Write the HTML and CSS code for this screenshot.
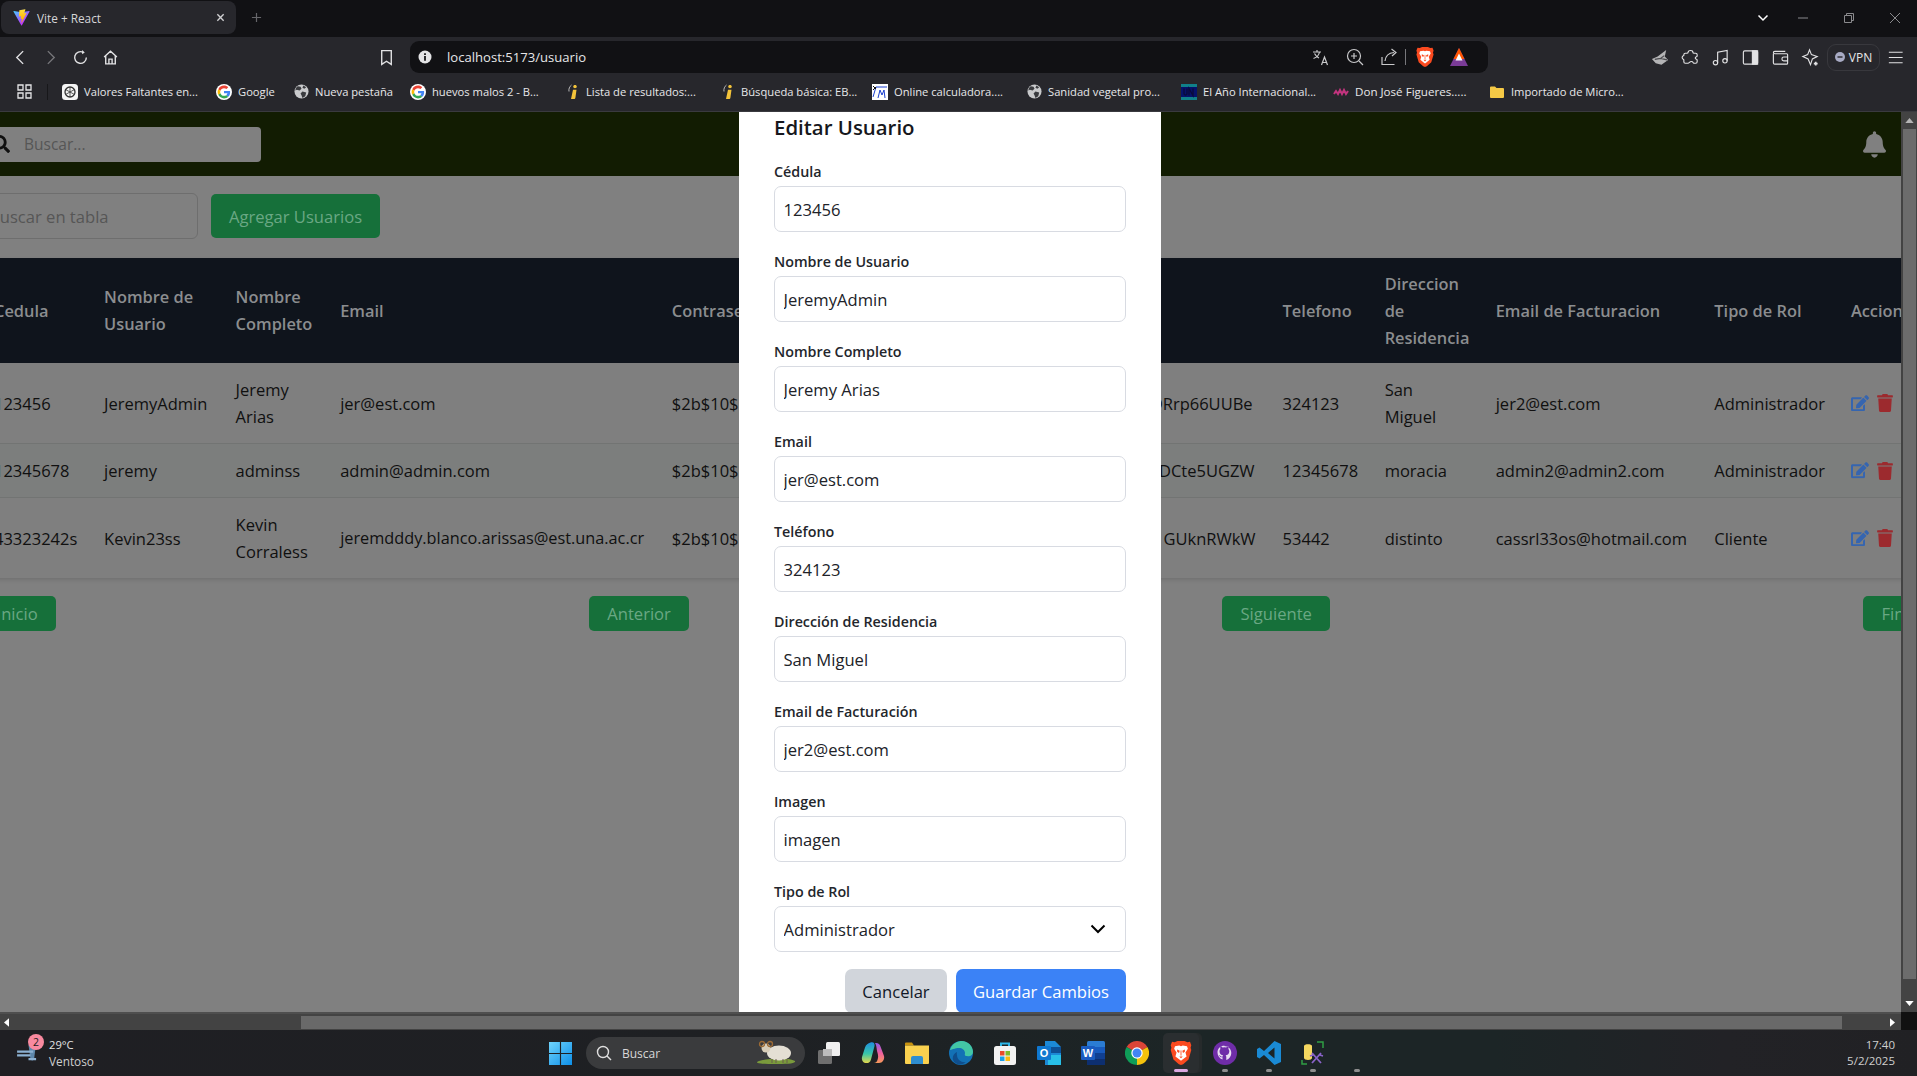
FILE: index.html
```html
<!DOCTYPE html>
<html lang="es">
<head>
<meta charset="utf-8">
<title>Vite + React</title>
<link rel="stylesheet" href="styles.css">
</head>
<body>
<svg class="defs" width="0" height="0" aria-hidden="true">
  <defs>
    <linearGradient id="vg1" x1="6" y1="33" x2="235" y2="344" gradientUnits="userSpaceOnUse"><stop stop-color="#41D1FF"/><stop offset="1" stop-color="#BD34FE"/></linearGradient>
    <linearGradient id="vg2" x1="194" y1="8" x2="236" y2="293" gradientUnits="userSpaceOnUse"><stop stop-color="#FFEA83"/><stop offset=".08" stop-color="#FFDD35"/><stop offset="1" stop-color="#FFA800"/></linearGradient>
    <linearGradient id="winG" x1="0" y1="0" x2="1" y2="1"><stop stop-color="#6fd3fb"/><stop offset="1" stop-color="#0d8fe8"/></linearGradient>
    <linearGradient id="copA" x1="0" y1="0" x2="0" y2="1"><stop stop-color="#1f8fe0"/><stop offset=".55" stop-color="#38c6a8"/><stop offset="1" stop-color="#e6d84a"/></linearGradient>
    <linearGradient id="copB" x1="0" y1="0" x2="0" y2="1"><stop stop-color="#8a5be6"/><stop offset=".5" stop-color="#ee5fa0"/><stop offset="1" stop-color="#f79a5a"/></linearGradient>
    <symbol id="vite" viewBox="0 0 410 404">
      <path d="M399.641 59.5246L215.643 388.545C211.844 395.338 202.084 395.378 198.228 388.618L10.5817 59.5563C6.38087 52.1896 12.6802 43.2665 21.0281 44.7586L205.223 77.6824C206.398 77.8924 207.601 77.8904 208.776 77.6763L389.119 44.8058C397.439 43.2894 403.768 52.1434 399.641 59.5246Z" fill="url(#vg1)"/>
      <path d="M292.965 1.5744L156.801 28.2552C154.563 28.6937 152.906 30.5903 152.771 32.8664L144.395 174.33C144.198 177.662 147.258 180.248 150.51 179.498L188.42 170.749C191.967 169.931 195.172 173.055 194.443 176.622L183.18 231.775C182.422 235.487 185.907 238.661 189.532 237.56L212.947 230.446C216.577 229.344 220.065 232.527 219.297 236.242L201.398 322.875C200.278 328.294 207.486 331.249 210.492 326.603L212.5 323.5L323.454 102.072C325.312 98.3645 322.108 94.137 318.036 94.9228L279.014 102.454C275.347 103.161 272.227 99.746 273.262 96.1583L298.731 7.86689C299.767 4.27314 296.636 0.855181 292.965 1.5744Z" fill="url(#vg2)"/>
    </symbol>
    <symbol id="google" viewBox="-6 -6 60 60">
      <circle cx="24" cy="24" r="30" fill="#fff"/>
      <path fill="#EA4335" d="M24 9.5c3.54 0 6.71 1.22 9.21 3.6l6.85-6.85C35.9 2.38 30.47 0 24 0 14.62 0 6.51 5.38 2.56 13.22l7.98 6.19C12.43 13.72 17.74 9.5 24 9.5z"/>
      <path fill="#4285F4" d="M46.98 24.55c0-1.57-.15-3.09-.38-4.55H24v9.02h12.94c-.58 2.96-2.26 5.48-4.78 7.18l7.73 6c4.51-4.18 7.09-10.36 7.09-17.65z"/>
      <path fill="#FBBC05" d="M10.53 28.59c-.48-1.45-.76-2.99-.76-4.59s.27-3.14.76-4.59l-7.98-6.19C.92 16.46 0 20.12 0 24c0 3.88.92 7.54 2.56 10.78l7.97-6.19z"/>
      <path fill="#34A853" d="M24 48c6.48 0 11.93-2.13 15.89-5.81l-7.73-6c-2.15 1.45-4.92 2.3-8.16 2.3-6.26 0-11.57-4.22-13.47-9.91l-7.98 6.19C6.51 42.62 14.62 48 24 48z"/>
    </symbol>
    <symbol id="globe" viewBox="0 0 16 16">
      <circle cx="8" cy="8" r="7.500" fill="#c9cacc"/>
      <path d="M4 2.500l3 .5 1 2-2 2-3-1-1.500 1C1.500 5 2.500 3.500 4 2.500zM9 8l4 1-1 4-3 2-1-3-1-2zM10 1.500l3 2-2 1.500-2-1z" fill="#3a3b3f"/>
    </symbol>
    <symbol id="info-yellow" viewBox="0 0 13 16">
      <path d="M8 1c1 0 1.800.7 1.800 1.600S9 4.300 8 4.300 6.200 3.500 6.200 2.600 7 1 8 1zM6 5.700h3.500L8.400 13.700c-.1.800-.6 1.300-1.500 1.300H4z" fill="#f3c33a"/>
      <path d="M4.500 1C2.500 2.500 1.500 5 2 7.500" stroke="#b9b9b9" fill="none"/>
    </symbol>
    <symbol id="brave" viewBox="0 0 24 28">
      <path d="M4.500 1.500L8 0h8l3.500 1.500L22.500 1l1.500 4-.8 3 .8 2.500-3.200 11L14.500 27 12 28l-2.500-1L3.200 21.500 0 10.500.8 8 0 5l1.500-4z" fill="#fb4a1f"/>
      <path d="M5 6l5-.8 2 .8 2-.8 5 .8 1 3-2.800 4.500L18.500 18 13.500 22l-1.500 1-1.500-1L5.500 18l1.300-4.500L4 9z" fill="#fff"/>
      <path d="M7.500 10l3 1.500-.8 2.500-2.200-1.500zM16.500 10l-3 1.500.8 2.500 2.200-1.500zM10 18h4l-2 2.200z" fill="#fb4a1f"/>
      <path d="M12 11v6" stroke="#fb4a1f"/>
    </symbol>
    <symbol id="search-fa" viewBox="0 0 512 512"><path d="M505 442.700L405.300 343c-4.500-4.500-10.600-7-17-7H372c27.600-35.300 44-79.700 44-128C416 93.100 322.900 0 208 0S0 93.100 0 208s93.100 208 208 208c48.300 0 92.700-16.400 128-44v16.300c0 6.400 2.500 12.500 7 17l99.700 99.700c9.400 9.400 24.600 9.400 33.900 0l28.300-28.300c9.400-9.400 9.400-24.600.1-34zM208 336c-70.700 0-128-57.200-128-128 0-70.700 57.200-128 128-128 70.700 0 128 57.200 128 128 0 70.700-57.200 128-128 128z"/></symbol>
    <symbol id="edit" viewBox="0 0 576 512"><path d="M402.600 83.200l90.200 90.200c3.800 3.800 3.800 10 0 13.800L274.400 405.600l-92.800 10.300c-12.400 1.400-22.900-9.100-21.500-21.500l10.300-92.800L388.800 83.200c3.800-3.800 10-3.800 13.800 0zm162-22.900l-48.800-48.800c-15.200-15.200-39.900-15.200-55.200 0l-35.400 35.400c-3.800 3.800-3.800 10 0 13.800l90.200 90.200c3.800 3.800 10 3.800 13.800 0l35.400-35.400c15.200-15.300 15.200-40 0-55.200zM384 346.200V448H64V128h229.800c3.200 0 6.200-1.300 8.500-3.500l40-40c7.600-7.600 2.200-20.500-8.500-20.500H48C21.500 64 0 85.500 0 112v352c0 26.500 21.500 48 48 48h352c26.500 0 48-21.500 48-48V306.200c0-10.700-12.900-16-20.500-8.500l-40 40c-2.200 2.300-3.500 5.300-3.500 8.500z"/></symbol>
    <symbol id="trash" viewBox="0 0 448 512"><path d="M432 32H312l-9.400-18.700A24 24 0 0 0 281.100 0H166.800a23.720 23.720 0 0 0-21.400 13.300L136 32H16A16 16 0 0 0 0 48v32a16 16 0 0 0 16 16h416a16 16 0 0 0 16-16V48a16 16 0 0 0-16-16zM53.200 467a48 48 0 0 0 47.900 45h245.800a48 48 0 0 0 47.900-45L416 128H32z"/></symbol>
  </defs>
</svg>

<header class="tabstrip">
  <div class="tab">
    <svg class="tab-icon"><use href="#vite"/></svg>
    <span class="tab-title">Vite + React</span>
    <svg class="tab-close" viewBox="0 0 10 10"><path d="M1.500 1.500l7 7M8.500 1.500l-7 7"/></svg>
  </div>
  <svg class="tab-plus" viewBox="0 0 12 12"><path d="M6 1v10M1 6h10"/></svg>
  <div class="win-controls">
    <span class="win-cell win-chevron"><svg viewBox="0 0 12 12" width="12" height="12"><path d="M1.500 3.500L6 8l4.500-4.500" fill="none" stroke="#fff" stroke-width="1.500"/></svg></span>
    <span class="win-cell"><svg viewBox="0 0 12 12" width="12" height="12"><path d="M1 6h10" class="win-line"/></svg></span>
    <span class="win-cell"><svg viewBox="0 0 12 12" width="12" height="12"><path d="M1.500 3.500h7v7h-7zM3.500 3.500v-2h7v7h-2" class="win-line"/></svg></span>
    <span class="win-cell win-close"><svg viewBox="0 0 12 12" width="12" height="12"><path d="M1 1l10 10M11 1L1 11" class="win-line"/></svg></span>
  </div>
</header>

<nav class="toolbar">
  <span class="tool"><svg viewBox="0 0 16 16"><path d="M10.500 2L4.500 8l6 6"/></svg></span>
  <span class="tool tool-dim"><svg viewBox="0 0 16 16"><path d="M5.500 2l6 6-6 6"/></svg></span>
  <span class="tool"><svg viewBox="0 0 16 16"><path d="M13.500 8A5.500 5.500 0 1 1 10.500 3.100"/><path d="M9.500 1l2.500 2.200L9.500 5z" class="solid"/></svg></span>
  <span class="tool"><svg viewBox="0 0 16 16"><path d="M2 7.500L8 2l6 5.500M3.500 6.500V14h9V6.500M6.500 14V9.500h3V14"/></svg></span>
  <span class="tool tool-bookmark"><svg viewBox="0 0 16 16"><path d="M3.500 1.500h9v13L8 11.500l-4.500 3z"/></svg></span>
  <div class="addressbar">
    <svg class="addr-info" viewBox="0 0 16 16"><circle cx="8" cy="8" r="6.500" fill="#e4e4e6"/><path d="M7.100 7h1.800v4.800H7.100zM7.100 4.200h1.800V6H7.100z" fill="#17171a"/></svg>
    <span class="addr-url">localhost:5173/usuario</span>
    <div class="addr-actions">
      <svg class="addr-icon" viewBox="0 0 20 20"><path d="M2 5h8M6 3v2M8.500 5c-.5 3-3 5.500-6 6.500M3.500 6.500c1 2 2.500 3.500 4.500 4.500M10.500 18l3-8 3 8M11.500 15.500h4"/></svg>
      <svg class="addr-icon" viewBox="0 0 20 20"><circle cx="9" cy="9" r="6.500"/><path d="M14 14l4 4M9 6v6M6 9h6"/></svg>
      <svg class="addr-icon" viewBox="0 0 20 20"><path d="M3 10v7.500h12.500M6 14c.5-5 3.500-8 9-8.500M12.500 2L17 5.500 13 9"/></svg>
      <span class="addr-sep"></span>
      <svg class="addr-brand"><use href="#brave"/></svg>
      <svg class="addr-brand" viewBox="0 0 20 20"><path d="M10 1L19 19H1z" fill="#7a3b97"/><path d="M10 1L15.500 12H4.500z" fill="#ff5500"/><path d="M10 6.500l3.500 7h-7z" fill="#fff"/></svg>
    </div>
  </div>
  <span class="tool tool-ext-first tool-large"><svg viewBox="0 0 20 20"><path d="M1 11.500L7 9l9-7-1.500 7 3.500 3.500-7 5-6-1.500z" class="solid-gray"/><path d="M4 12l6-1 7 1.500M10 11l4-3" stroke="#4a4a4e" fill="none"/></svg></span>
  <span class="tool tool-large"><svg viewBox="0 0 20 20"><path d="M7.500 4.500C7.500 2 12.500 2 12.500 4.500c0 .8.800 1 1.500 1h1.500c1 0 1.500.5 1.500 1.500v1.500c0 .8-2 .5-2 2s2 1.200 2 2v2c0 1-.5 1.500-1.500 1.500h-2c-1 0-.5-1.800-2.500-1.800S8.500 16 7.500 16h-3c-1 0-1.500-.5-1.500-1.500v-2c0-1-1.800-.5-1.800-2.500s1.800-1.500 1.800-2.500V7c0-1 .5-1.500 1.500-1.500H6c.8 0 1.500-.2 1.500-1z"/></svg></span>
  <span class="tool tool-large"><svg viewBox="0 0 20 20"><path d="M7 15.500V4.500l10-2V13.500"/><circle cx="4.700" cy="15.500" r="2.300"/><circle cx="14.700" cy="13.500" r="2.300"/></svg></span>
  <span class="tool tool-large"><svg viewBox="0 0 20 20"><rect x="2.500" y="3" width="15" height="14" rx="1.500"/><rect x="12" y="3" width="5.500" height="14" class="solid-soft"/></svg></span>
  <span class="tool tool-large"><svg viewBox="0 0 20 20"><path d="M4 3.500h11M2.500 6v9.500a1.500 1.500 0 0 0 1.500 1.500h12.500a1 1 0 0 0 1-1V7a1 1 0 0 0-1-1H4a1.500 1.500 0 0 1-1.500-1.500c0-.5.5-1 1.500-1M18 9.500h-4.500a2 2 0 0 0 0 4H18"/></svg></span>
  <span class="tool tool-large"><svg viewBox="0 0 20 20"><path d="M9 2l2 5 6 2-5 2.500-2 6-2.500-6L2 9l5-2z"/><path d="M15.500 14.500v4M13.500 16.500h4" stroke-width="1.800"/></svg></span>
  <span class="vpn"><svg class="vpn-dot" viewBox="0 0 10 10"><circle cx="5" cy="5" r="5" fill="#a8abc4"/><path d="M2.500 4.300h5v1.400h-5z" fill="#27272c"/></svg>VPN</span>
  <span class="tool tool-large"><svg viewBox="0 0 20 20"><path d="M3 4.500h14.500M3 10h14.500M3 15.500h14.500"/></svg></span>
</nav>

<nav class="bookmarks">
  <svg class="apps" viewBox="0 0 15 15"><path d="M1 1h5v5H1zM9 1h5v5H9zM1 9h5v5H1zM9 9h5v5H9z"/></svg>
  <span class="bm-sep"></span>
  <a class="bm"><svg class="bm-ico" viewBox="0 0 16 16"><rect width="16" height="16" rx="3.500" fill="#f5f5f5"/><circle cx="8" cy="8" r="5" fill="none" stroke="#333" stroke-width="1.300"/><path d="M8 3v10M3.500 5.500l9 5M3.500 10.500l9-5" stroke="#333" stroke-width=".8"/></svg><span>Valores Faltantes en...</span></a>
  <a class="bm"><svg class="bm-ico"><use href="#google"/></svg><span>Google</span></a>
  <a class="bm"><svg class="bm-ico bm-ico-globe"><use href="#globe"/></svg><span>Nueva pestaña</span></a>
  <a class="bm"><svg class="bm-ico"><use href="#google"/></svg><span>huevos malos 2 - B...</span></a>
  <a class="bm"><svg class="bm-ico bm-ico-narrow"><use href="#info-yellow"/></svg><span>Lista de resultados:...</span></a>
  <a class="bm"><svg class="bm-ico bm-ico-narrow"><use href="#info-yellow"/></svg><span>Búsqueda básica: EB...</span></a>
  <a class="bm"><svg class="bm-ico" viewBox="0 0 16 16"><rect width="16" height="16" fill="#fff"/><path d="M1 13L4 3h11M6 14l2-8 2 5 2-5 1 8" fill="none" stroke="#1a3fd0"/><path d="M1 2l3 3M1 6l3-3" stroke="#111"/></svg><span>Online calculadora....</span></a>
  <a class="bm"><svg class="bm-ico bm-ico-globe"><use href="#globe"/></svg><span>Sanidad vegetal pro...</span></a>
  <a class="bm"><svg class="bm-ico" viewBox="0 0 16 16"><rect width="16" height="16" fill="#06116b"/><rect y="0" width="16" height="3" fill="#10808a"/><rect y="13" width="16" height="3" fill="#10808a"/><path d="M3 4.500v5c0 2 3 2 3 0v-5M8 11.500v-7l4 7v-7" fill="none" stroke="#0a0a3a" stroke-width="1.300"/></svg><span>El Año Internacional...</span></a>
  <a class="bm"><svg class="bm-ico" viewBox="0 0 16 16"><path d="M1 10l2-3 2 3 2-4 2 4 2-4 2 4 2-3" fill="none" stroke="#c2347e" stroke-width="2"/></svg><span class="bm-wide">Don José Figueres.....</span></a>
  <a class="bm"><svg class="bm-ico" viewBox="0 0 16 16"><path d="M1 3.500a1 1 0 0 1 1-1h4l1.500 1.500H14a1 1 0 0 1 1 1V13a1 1 0 0 1-1 1H2a1 1 0 0 1-1-1z" fill="#f5c946"/></svg><span>Importado de Micro...</span></a>
</nav>

<div class="viewport">
  <div class="viewport-row">
    <main class="page">
      <div class="content">
        <div class="app-header">
          <div class="header-search">
            <svg class="header-search-icon"><use href="#search-fa"/></svg>
            <input class="header-search-input" placeholder="Buscar...">
          </div>
          <svg class="bell" viewBox="0 0 448 512"><path d="M224 512c35.320 0 63.970-28.650 63.970-64H160.030c0 35.350 28.650 64 63.970 64zm215.390-149.710c-19.320-20.760-55.470-51.990-55.470-154.290 0-77.700-54.480-139.900-127.940-155.160V32c0-17.670-14.320-32-31.980-32s-31.980 14.330-31.980 32v20.840C118.560 68.100 64.080 130.300 64.080 208c0 102.300-36.150 133.530-55.470 154.290-6 6.450-8.660 14.160-8.610 21.710.11 16.400 12.980 32 32.100 32h383.800c19.120 0 32-15.600 32.100-32 .05-7.550-2.610-15.270-8.610-21.710z"/></svg>
        </div>

        <div class="table-tools">
          <input class="table-search" placeholder="Buscar en tabla">
          <button class="btn-green btn-add">Agregar Usuarios</button>
        </div>

        <table class="users">
          <colgroup>
            <col class="c1"><col class="c2"><col class="c3"><col class="c4"><col class="c5"><col class="c6"><col class="c7"><col class="c8"><col class="c9"><col class="c10">
          </colgroup>
          <thead>
            <tr>
              <th>Cedula</th><th>Nombre de Usuario</th><th>Nombre Completo</th><th>Email</th><th>Contraseña</th><th>Telefono</th><th>Direccion de Residencia</th><th>Email de Facturacion</th><th>Tipo de Rol</th><th>Acciones</th>
            </tr>
          </thead>
          <tbody>
            <tr class="r-tall">
              <td>123456</td><td>JeremyAdmin</td><td>Jeremy Arias</td><td>jer@est.com</td>
              <td><div class="hash hash-first"><span>$2b$10$kV9mXq2LpT7wYc</span><span>QRrp66UUBe</span></div></td>
              <td>324123</td><td>San Miguel</td><td>jer2@est.com</td><td>Administrador</td>
              <td><div class="acts"><svg class="ic-edit"><use href="#edit"/></svg><svg class="ic-trash"><use href="#trash"/></svg></div></td>
            </tr>
            <tr class="r-short">
              <td>12345678</td><td>jeremy</td><td>adminss</td><td>admin@admin.com</td>
              <td><div class="hash hash-second"><span>$2b$10$Hs4nUe8JzR1oWd</span><span>DCte5UGZW</span></div></td>
              <td>12345678</td><td>moracia</td><td>admin2@admin2.com</td><td>Administrador</td>
              <td><div class="acts"><svg class="ic-edit"><use href="#edit"/></svg><svg class="ic-trash"><use href="#trash"/></svg></div></td>
            </tr>
            <tr class="r-tall r-last">
              <td>43323242s</td><td>Kevin23ss</td><td>Kevin Corraless</td><td class="cell-long">jeremdddy.blanco.arissas@est.una.ac.cr</td>
              <td><div class="hash"><span>$2b$10$Bt6yPa3MfN0xLg</span><span>GUknRWkW</span></div></td>
              <td>53442</td><td>distinto</td><td>cassrl33os@hotmail.com</td><td>Cliente</td>
              <td><div class="acts"><svg class="ic-edit"><use href="#edit"/></svg><svg class="ic-trash"><use href="#trash"/></svg></div></td>
            </tr>
          </tbody>
        </table>

        <div class="pagination">
          <button class="btn-green btn-page">Inicio</button>
          <button class="btn-green btn-page">Anterior</button>
          <button class="btn-green btn-page">Siguiente</button>
          <button class="btn-green btn-page">Fin</button>
        </div>
      </div>

      <div class="modal-layer">
        <section class="modal">
          <h2 class="modal-title">Editar Usuario</h2>
          <form class="modal-form">
            <label class="field"><span class="field-label">Cédula</span><input class="field-input" value="123456"></label>
            <label class="field"><span class="field-label">Nombre de Usuario</span><input class="field-input" value="JeremyAdmin"></label>
            <label class="field"><span class="field-label">Nombre Completo</span><input class="field-input" value="Jeremy Arias"></label>
            <label class="field"><span class="field-label">Email</span><input class="field-input" value="jer@est.com"></label>
            <label class="field"><span class="field-label">Teléfono</span><input class="field-input" value="324123"></label>
            <label class="field"><span class="field-label">Dirección de Residencia</span><input class="field-input" value="San Miguel"></label>
            <label class="field"><span class="field-label">Email de Facturación</span><input class="field-input" value="jer2@est.com"></label>
            <label class="field"><span class="field-label">Imagen</span><input class="field-input" value="imagen"></label>
            <label class="field"><span class="field-label">Tipo de Rol</span>
              <span class="select-wrap">
                <select class="field-input field-select"><option>Administrador</option><option>Cliente</option></select>
                <svg class="select-chevron" viewBox="0 0 16 10"><path d="M1.500 1.500L8 8l6.500-6.500"/></svg>
              </span>
            </label>
            <div class="modal-actions">
              <button type="button" class="btn-cancel">Cancelar</button>
              <button type="button" class="btn-save">Guardar Cambios</button>
            </div>
          </form>
        </section>
      </div>
    </main>
    <div class="vscroll">
      <svg class="sb-arrow" viewBox="0 0 10 6"><path d="M5 0l5 6H0z"/></svg>
      <span class="vthumb"></span>
      <svg class="sb-arrow sb-arrow-w" viewBox="0 0 10 6"><path d="M5 6l5-6H0z"/></svg>
    </div>
  </div>
  <div class="hscroll">
    <svg class="sb-h-arrow" viewBox="0 0 6 10"><path d="M0 5l6-5v10z"/></svg>
    <span class="hthumb"></span>
    <svg class="sb-h-arrow" viewBox="0 0 6 10"><path d="M6 5L0 0v10z"/></svg>
    <span class="sb-corner"></span>
  </div>
</div>

<footer class="taskbar">
  <div class="weather">
    <svg class="weather-icon" viewBox="0 0 24 20"><path d="M12 1a5 5 0 0 1 7 6l-1 8c-.5 3-3.500 3-4 .5" fill="#5d87ab"/><path d="M0 8h17M0 12h14M12 16h8" stroke="#8cb1d2" stroke-width="2.300" fill="none"/></svg>
    <span class="weather-badge">2</span>
    <div class="weather-text"><span>29°C</span><span class="weather-state">Ventoso</span></div>
  </div>
  <span class="tb-win"><svg viewBox="0 0 24 24"><path d="M0 0h11.400v11.400H0zM12.600 0H24v11.400H12.600zM0 12.600h11.400V24H0zM12.600 12.600H24V24H12.600z" fill="url(#winG)"/></svg></span>
  <div class="tb-search">
    <svg class="tb-search-ico" viewBox="0 0 16 16"><circle cx="7" cy="7" r="5.500"/><path d="M11 11l4 4"/></svg>
    <span>Buscar</span>
    <svg class="tb-sheep" viewBox="0 0 42 26"><path d="M2 22c6-4 32-5 38-1 1 2-4 3-18 3S1 24 2 22z" fill="#7a9a3c"/><ellipse cx="24" cy="13" rx="12" ry="7.500" fill="#e4dfd4"/><circle cx="11" cy="8" r="4.500" fill="#d8cdb8"/><circle cx="7" cy="4" r="2.500" fill="none" stroke="#9b6a34" stroke-width="1.300"/><circle cx="15" cy="4" r="2.500" fill="none" stroke="#9b6a34" stroke-width="1.300"/><path d="M17 19v4M21 19v4M28 19v4M32 19v4" stroke="#6b5d4c"/></svg>
  </div>
  <div class="tb-apps">
    <span class="tb-app"><svg viewBox="0 0 24 24"><rect x="9" y="1" width="14" height="14" rx="1.500" fill="#f0f0f0"/><rect x="1" y="9" width="14" height="14" rx="1.500" fill="#6f6f6f"/><rect x="6" y="8" width="9" height="7" fill="#bdbdbd"/></svg></span>
    <span class="tb-app"><svg viewBox="0 0 24 24"><path d="M9.500 1.500c3-1 4.500 1 4 3.500L10 18.500c-.8 3-3 4-5.500 3.500C1.500 21.500.5 18.500 1 16L4 6.500C5 3.500 7 2.300 9.500 1.500z" fill="url(#copA)"/><path d="M14 2c3-.5 4.800 1 5.500 3.500L23 15c.8 3.500-1.500 7-5 7h-5c3 0 3.500-3 4-5 .5-2.500-.5-5-1-7-.5-3-.5-6-2-8z" fill="url(#copB)"/></svg></span>
    <span class="tb-app"><svg viewBox="0 0 24 24"><path d="M0 2.500a1 1 0 0 1 1-1h6l2 3H0z" fill="#c8920f"/><path d="M0 4.500h24V22a1 1 0 0 1-1 1H1a1 1 0 0 1-1-1z" fill="#fad14f"/><path d="M6 17a2 2 0 0 1 2-2h8a2 2 0 0 1 2 2v6H6z" fill="#2f8ed0"/></svg></span>
    <span class="tb-app"><svg viewBox="0 0 24 24"><circle cx="12" cy="12" r="12" fill="#1371b5"/><path d="M1 9C3 2 9 0 13 0c6 0 11 5 11 11 0 3-3 5-6 4-3 0-2-2-2-3 0-3-3-5-6-5-4 0-8 2-9 2z" fill="#43c6a5"/><path d="M8 14c0 5 5 8 9 7-4 4-11 3-13-2-1-3 1-7 4-8 0 1-.5 2 0 3z" fill="#0f4e8c"/></svg></span>
    <span class="tb-app"><svg viewBox="0 0 24 24"><path d="M8 6V2.500h8V6" fill="none" stroke="#2cb6e8" stroke-width="2"/><rect x="1" y="5" width="22" height="19" rx="2.500" fill="#f2f2f2"/><path d="M7 10h4.500v4.500H7z" fill="#ea4a2a"/><path d="M12.500 10H17v4.500h-4.500z" fill="#7fba2a"/><path d="M7 15.500h4.500V20H7z" fill="#1aa0e8"/><path d="M12.500 15.500H17V20h-4.500z" fill="#fcba0e"/></svg></span>
    <span class="tb-app"><svg viewBox="0 0 24 24"><path d="M8 0h10l6 6v16a2 2 0 0 1-2 2H8z" fill="#1c89d6"/><path d="M14 6h10v6H14z" fill="#0e4f95"/><path d="M11 14h13v10H11z" fill="#28c0e8"/><rect x="0" y="5" width="14" height="14" rx="1" fill="#0f78d0"/><text x="7" y="16" class="tb-letter">O</text></svg></span>
    <span class="tb-app"><svg viewBox="0 0 24 24"><rect x="6" y="0" width="18" height="24" rx="1.500" fill="#2b7cd3"/><rect x="6" y="6" width="18" height="6" fill="#185abd"/><rect x="6" y="12" width="18" height="6" fill="#103f91"/><rect x="6" y="18" width="18" height="6" fill="#0d2f70"/><rect x="0" y="5" width="14" height="14" rx="1" fill="#1a5bc0"/><text x="7" y="16" class="tb-letter">W</text></svg></span>
    <span class="tb-app"><svg viewBox="0 0 24 24"><path d="M12 12L1.600 6A12 12 0 0 1 22.400 6z" fill="#db4437"/><path d="M12 12l10.400-6A12 12 0 0 1 12 24z" fill="#f4c20d"/><path d="M12 12L12 24A12 12 0 0 1 1.600 6z" fill="#0f9d58"/><circle cx="12" cy="12" r="5.700" fill="#fff"/><circle cx="12" cy="12" r="4.500" fill="#4285f4"/></svg></span>
    <span class="tb-app tb-active"><svg><use href="#brave"/></svg></span>
    <span class="tb-app tb-dot"><svg viewBox="0 0 24 24"><circle cx="12" cy="12" r="12" fill="#6f2da8"/><path d="M12 4.500c-4.500 0-7.500 3-7.500 7 0 3.300 2 6 5 7v-2.300c-2 .5-2.700-.8-3-1.500-.3-.7-.9-1-.9-1 .9 0 1.600.9 1.800 1.200.8 1 2 .8 2.200.5 0-.5.300-.9.600-1.200-2-.3-3.700-1.200-3.700-4 0-.9.300-1.700.9-2.300-.2-.5-.3-1.500.1-2.300.9 0 1.800.6 2.100.9a7 7 0 0 1 3.600 0c.3-.3 1.200-.9 2.100-.9.4.8.3 1.800.1 2.300.6.6.9 1.400.9 2.300 0 2.800-1.700 3.700-3.700 4 .4.300.7.900.7 1.700v3.100c3-1 5-3.700 5-7 0-4-3-7-7.500-7z" fill="#e9dff2"/></svg></span>
    <span class="tb-app tb-dot"><svg viewBox="0 0 24 24"><path d="M17.500 0L24 3v18l-6.500 3L7 14l-4.500 3.500L0 16V8l2.500-1.500L7 10zM17.500 6.500L11 12l6.500 5.500z" fill="#1a8ad4"/></svg></span>
    <span class="tb-app tb-dot"><svg viewBox="0 0 24 24"><path d="M3 5c0-2.500 8-2.500 8 0v12c0 2.500-8 2.500-8 0z" fill="#f5d860"/><path d="M16 1h6v6M1 19v4h5" fill="none" stroke="#2f9e44" stroke-width="1.500"/><path d="M11 22l9-10M20 22l-9-10M9 15l3-1M22 15l-3-1" stroke="#8a63c9" stroke-width="1.800"/></svg></span>
    <span class="tb-app tb-dot"></span>
  </div>
  <div class="clock"><span>17:40</span><span>5/2/2025</span></div>
</footer>
</body>
</html>
```
FILE: styles.css
```css
* { box-sizing: border-box; }
html, body { margin: 0; height: 100%; overflow: hidden; }
body {
  display: flex;
  flex-direction: column;
  height: 1076px;
  font-family: "Open Sans", "Noto Sans", sans-serif;
  background: #111114;
  color: #e6e6e8;
}
.defs { position: absolute; }

/* Browser tab strip */
.tabstrip { height: 37px; flex: none; display: flex; align-items: flex-start; background: #111114; padding: 1px 0 0 1px; }
.tab { width: 235px; height: 33px; background: #27272c; border-radius: 8px; display: flex; align-items: center; padding: 0 11px 0 12px; }
.tab-icon { width: 17px; height: 17px; flex: none; }
.tab-title { margin-left: 7px; flex: 1; font-size: 11.800px; color: #d6d6d8; }
.tab-close { width: 9px; height: 9px; stroke: #d0d0d2; stroke-width: 1.500; fill: none; }
.tab-plus { width: 11px; height: 11px; margin: 11px 0 0 15px; stroke: #66666a; stroke-width: 1.300; }
.win-controls { margin-left: auto; display: flex; height: 33px; align-items: center; }
.win-cell { width: 46px; height: 33px; display: flex; align-items: center; justify-content: center; }
.win-chevron { width: 34px; }
.win-close { width: 45px; }
.win-line { fill: none; stroke: #8a8a8d; stroke-width: 1; }

/* Browser toolbar */
.toolbar { height: 37px; flex: none; background: #27272c; display: flex; align-items: center; padding: 4px 0 1px 5px; }
.tool { width: 30px; height: 30px; flex: none; display: flex; align-items: center; justify-content: center; }
.tool svg { width: 17px; height: 17px; fill: none; stroke: #e2e2e4; stroke-width: 1.300; }
.tool-large svg { width: 19px; height: 19px; stroke-width: 1.200; }
.tool svg .solid { fill: #e2e2e4; stroke: none; }
.tool svg .solid-gray { fill: #b4b4b6; stroke: none; }
.tool svg .solid-soft { fill: #e2e2e4; }
.tool-dim svg { stroke: #77777b; }
.tool-bookmark { margin-left: 246px; }
.tool-ext-first { margin-left: 157px; }
.addressbar { width: 1078px; height: 32px; margin-left: 9px; background: #111114; border-radius: 9px; display: flex; align-items: center; padding: 0 19px 0 7px; }
.addr-info { width: 16px; height: 16px; flex: none; }
.addr-url { margin-left: 14px; font-size: 13.100px; color: #e6e6e8; }
.addr-actions { margin-left: auto; display: flex; align-items: center; gap: 14px; }
.addr-icon { width: 20px; height: 20px; fill: none; stroke: #c9c9cb; stroke-width: 1.200; }
.addr-sep { width: 1px; height: 16px; background: #77777b; margin: 0 -5px 0 -8px; }
.addr-brand { width: 20px; height: 20px; }
.vpn { width: 53px; height: 27px; margin-left: 2px; border: 1px solid #38383d; border-radius: 9px; display: flex; align-items: center; justify-content: center; gap: 4px; font-size: 12px; color: #e6e6e8; }
.vpn-dot { width: 10px; height: 10px; flex: none; }

/* Bookmarks */
.bookmarks {
  height: 38px; flex: none; background: #27272c; border-bottom: 1px solid #3a3a3f;
  display: grid; align-items: center; padding: 0 0 2px 17px;
  grid-template-columns: 30px 15px 154px 78px 116px 157px 155px 150px 155px 154px 152px 156px 140px;
}
.apps { width: 15px; height: 15px; fill: none; stroke: #e6e6e8; stroke-width: 1.300; }
.bm-sep { width: 1px; height: 16px; background: #17171a; }
.bm { display: flex; align-items: center; gap: 6px; font-size: 11.200px; color: #e8e8ea; white-space: nowrap; }
.bm-ico { width: 16px; height: 16px; flex: none; }
.bm-ico-globe { width: 15px; height: 15px; }
.bm-ico-narrow { width: 13px; }
.bm-wide { font-size: 11.600px; }

/* Viewport and scrollbars */
.viewport { flex: none; height: 918px; display: flex; flex-direction: column; background: #808080; }
.viewport-row { flex: none; height: 900px; display: flex; }
.page { width: 1901px; flex: none; position: relative; overflow: hidden; background: #808080; }
.vscroll { width: 16px; flex: none; background: #434343; display: flex; flex-direction: column; align-items: center; padding-left: 1px; }
.sb-arrow { width: 9px; height: 5px; flex: none; margin: 6px 0; fill: #b5b5b5; }
.sb-arrow-w { fill: #fff; margin: auto 0 6px; }
.vthumb { width: 13px; height: 850px; flex: none; background: #6c6c6c; }
.hscroll { height: 18px; flex: none; background: #434343; border-top: 2px solid #4f4f4f; display: flex; align-items: center; padding-left: 4px; }
.sb-h-arrow { width: 5px; height: 9px; fill: #fff; flex: none; }
.hthumb { width: 1541px; height: 13px; margin: 0 48px 0 292px; background: #696969; }
.sb-corner { width: 16px; height: 18px; background: #111; margin-left: auto; margin-top: -2px; }

/* App page */
.content { margin-left: -40px; width: 1941px; font-size: 16.500px; color: #101010; }
.app-header { height: 64px; background: #121c02; display: flex; align-items: center; justify-content: space-between; padding-right: 15px; }
.header-search { position: relative; width: 301px; height: 35px; }
.header-search-input { width: 100%; height: 100%; border: 0; border-radius: 4px; background: #808080; padding: 0 0 0 64px; font: 15.500px "Open Sans", sans-serif; }
.header-search-input::placeholder { color: #565656; opacity: 1; }
.header-search-icon { position: absolute; left: 32px; top: 8px; width: 18px; height: 18px; fill: #101010; }
.bell { width: 23px; height: 27px; fill: #808080; }
.table-tools { height: 82px; display: flex; align-items: center; padding-bottom: 2px; gap: 14px; margin-left: -2px; }
.table-search { width: 240px; height: 46px; border: 1px solid #6e6e6e; border-radius: 6px; background: #808080; padding: 0 0 0 30px; font: 16.600px "Open Sans", sans-serif; color: #555; }
.table-search::placeholder { color: #565656; opacity: 1; }
.btn-green { background: #16703a; color: #6aa884; border: 0; border-radius: 5px; font: 16.600px "Open Sans", sans-serif; }
.btn-add { width: 169px; height: 44px; margin-left: -1px; }

.users { table-layout: fixed; width: 1988px; margin-left: 20.500px; border-collapse: collapse; box-shadow: 0 2px 4px rgba(0,0,0,.12); }
.c1 { width: 110px; } .c2 { width: 131.500px; } .c3 { width: 104.500px; } .c4 { width: 331.500px; } .c5 { width: 610.500px; }
.c6 { width: 102px; } .c7 { width: 111px; } .c8 { width: 218.500px; } .c9 { width: 136.500px; } .c10 { width: 131px; }
.users thead tr { height: 105px; background: #0f141c; }
.users th { padding: 0 13.500px 1px; text-align: left; font-weight: 600; font-size: 16.400px; line-height: 27px; color: #8b8d8f; }
.users td { padding: 0 13.500px; line-height: 27px; }
.users tbody tr { background: #7f7f7f; border-bottom: 1px solid #727473; }
.users .r-short { background: #7c7e7d; }
.users .r-tall { height: 80.500px; }
.users .r-short { height: 54px; }
.users .r-last { border-bottom: 0; }
.users .cell-long { font-size: 16.300px; white-space: nowrap; }
.hash { display: flex; justify-content: space-between; white-space: nowrap; }
.hash-first { padding-right: 3px; }
.hash-second { padding-right: 1px; }
.acts { display: flex; gap: 8px; align-items: center; }
.ic-edit { width: 18px; height: 16.500px; fill: #3565b0; }
.ic-trash { width: 16px; height: 18px; fill: #9c2a2e; }
.pagination { width: 1945px; margin: 18px 0 0 18px; display: flex; justify-content: space-between; }
.btn-page { height: 35px; padding: 0 18.500px; }

/* Modal */
.modal-layer { position: absolute; inset: 0; display: flex; justify-content: center; align-items: flex-start; }
.modal { width: 422px; height: 900px; margin-left: -1px; background: #fff; padding: 0 35px; overflow: hidden; color: #111827; }
.modal-title { margin: 0 0 18px; font-size: 20.400px; line-height: 30px; font-weight: 600; color: #16171c; }
.modal-form { display: flex; flex-direction: column; gap: 18px; }
.field { display: flex; flex-direction: column; gap: 2px; }
.field-label { height: 24px; line-height: 23px; font-size: 14.300px; font-weight: 600; color: #23262c; }
.field-input { width: 352px; height: 46px; border: 1px solid #d8dbe2; border-radius: 7px; background: #fff; padding: 0 8.500px; font: 16.600px "Open Sans", sans-serif; color: #202228; }
.select-wrap { position: relative; display: block; height: 46px; }
.field-select { appearance: none; -webkit-appearance: none; }
.select-chevron { position: absolute; right: 20px; top: 18px; width: 16px; height: 10px; fill: none; stroke: #000; stroke-width: 2; }
.modal-actions { display: flex; justify-content: flex-end; gap: 9px; margin-top: -1px; }
.btn-cancel, .btn-save { height: 44px; border: 0; border-radius: 7px; font: 16.600px "Open Sans", sans-serif; }
.btn-cancel { width: 102px; background: #d1d5db; color: #111827; }
.btn-save { width: 170px; background: #3b82f6; color: #fff; }

/* Windows taskbar */
.taskbar { height: 46px; flex: none; display: flex; align-items: center; background: linear-gradient(90deg, #1f1f23 0%, #1e2023 40%, #1c2526 62%, #1c2526 78%, #222226 90%, #212124 100%); font-size: 11.500px; color: #e4e4e4; }
.weather { width: 538px; flex: none; position: relative; display: flex; align-items: center; padding-left: 17px; }
.weather-icon { width: 23px; height: 19px; flex: none; }
.weather-badge { position: absolute; left: 28px; top: -3px; width: 16px; height: 16px; border-radius: 50%; background: #f98aa0; color: #1a1a1a; font-size: 10.500px; line-height: 16px; text-align: center; }
.weather-text { display: flex; flex-direction: column; margin-left: 9px; font-size: 11.200px; line-height: 16px; }
.weather-state { font-size: 11.800px; color: #cfcfcf; }
.tb-win { width: 44px; flex: none; display: flex; justify-content: center; }
.tb-win svg { width: 23px; height: 23px; }
.tb-search { width: 219px; height: 32px; margin-left: 4px; flex: none; position: relative; display: flex; align-items: center; gap: 10px; padding-left: 10px; border-radius: 16px; background: #3a3b3d; color: #d8d8d8; font-size: 12px; }
.tb-search-ico { width: 16px; height: 16px; fill: none; stroke: #e0e0e0; stroke-width: 1.400; }
.tb-sheep { position: absolute; right: 8px; top: 3px; width: 42px; height: 26px; }
.tb-apps { display: flex; margin-left: 2px; }
.tb-app { width: 44px; height: 40px; position: relative; display: flex; align-items: center; justify-content: center; }
.tb-app svg { width: 24px; height: 24px; }
.tb-letter { font: 700 11px "Liberation Sans", sans-serif; fill: #fff; text-anchor: middle; }
.tb-active { background: #2a2e30; border-radius: 5px; width: 36px; margin: 0 4px; box-shadow: 3px 0 0 #262a2b; }
.tb-active::after { content: ""; position: absolute; left: 11px; bottom: 1px; width: 14px; height: 3px; border-radius: 2px; background: #dca9e2; }
.tb-dot::after { content: ""; position: absolute; left: 19px; bottom: 1px; width: 6px; height: 3px; border-radius: 2px; background: #8e8e8e; }
.clock { margin-left: auto; padding-right: 22px; display: flex; flex-direction: column; align-items: flex-end; font-size: 11.500px; line-height: 16px; color: #cfcfcf; }
```
